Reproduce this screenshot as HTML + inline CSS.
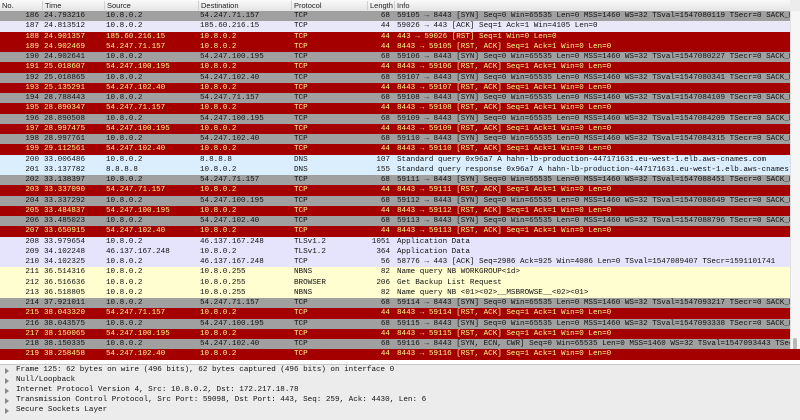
<!DOCTYPE html><html><head><style>
body{margin:0;width:800px;height:419px;overflow:hidden;background:#ececec;font-family:"Liberation Mono",monospace;font-size:7.6px;position:relative}
.hd{position:absolute;left:0;top:0;width:790px;height:11px;background:linear-gradient(#fafafa,#e4e4e4);border-bottom:1px solid #c8c8c8;font-family:"Liberation Sans",sans-serif;font-size:7.5px;color:#222}
.hd span{position:absolute;top:1px;border-left:1px solid #d0d0d0;padding-left:2px;height:9px}
.r{position:absolute;left:0;width:790px;height:10.25px;line-height:10.25px;white-space:nowrap;overflow:hidden;color:#111}
.r span{position:absolute}
.g{background:#a0a0a0;border-top:0}
.x{background:#a40000;color:#fff88a}
.w{background:#e8e8f8}
.d{background:#daeefe}
.l{background:#e6e4fc}
.y{background:#fefed0}
.n{right:751px;text-align:right}
.t{left:44px}.s{left:106px}.ds{left:200px}.p{left:294px}
.ln{right:400px;text-align:right}.i{left:397px}
.sb{position:absolute;left:790px;top:11px;width:10px;height:349px;background:#f6f6f6;border-left:1px solid #e0e0e0}
.th{position:absolute;left:793px;top:338px;width:4px;height:14px;border-radius:2px;background:#b8b8b8}
.bp{position:absolute;left:0;top:364px;width:800px;height:55px;background:#ececec;border-top:1px solid #c8c8c8}
.bl{position:absolute;left:16px;color:#111;white-space:nowrap}
.tri{position:absolute;left:5px;width:0;height:0;border-top:3px solid transparent;border-bottom:3px solid transparent;border-left:4px solid #8a8a8a}
</style></head><body>
<div class="hd"><span style="left:0;border:0">No.</span><span style="left:42px">Time</span><span style="left:104px">Source</span><span style="left:198px">Destination</span><span style="left:291px">Protocol</span><span style="left:367px">Length</span><span style="left:394px">Info</span></div>

<div class="r g" style="top:11px"><span class="n">186</span><span class="t">24.793216</span><span class="s">10.8.0.2</span><span class="ds">54.247.71.157</span><span class="p">TCP</span><span class="ln">68</span><span class="i">59105 → 8443 [SYN] Seq=0 Win=65535 Len=0 MSS=1460 WS=32 TSval=1547080119 TSecr=0 SACK_PE</span></div>
<div class="r w" style="top:21.25px"><span class="n">187</span><span class="t">24.813512</span><span class="s">10.8.0.2</span><span class="ds">185.60.216.15</span><span class="p">TCP</span><span class="ln">44</span><span class="i">59026 → 443 [ACK] Seq=1 Ack=1 Win=4105 Len=0</span></div>
<div class="r x" style="top:31.5px"><span class="n">188</span><span class="t">24.901357</span><span class="s">185.60.216.15</span><span class="ds">10.8.0.2</span><span class="p">TCP</span><span class="ln">44</span><span class="i">443 → 59026 [RST] Seq=1 Win=0 Len=0</span></div>
<div class="r x" style="top:41.75px"><span class="n">189</span><span class="t">24.902469</span><span class="s">54.247.71.157</span><span class="ds">10.8.0.2</span><span class="p">TCP</span><span class="ln">44</span><span class="i">8443 → 59105 [RST, ACK] Seq=1 Ack=1 Win=0 Len=0</span></div>
<div class="r g" style="top:52px"><span class="n">190</span><span class="t">24.902641</span><span class="s">10.8.0.2</span><span class="ds">54.247.100.195</span><span class="p">TCP</span><span class="ln">68</span><span class="i">59106 → 8443 [SYN] Seq=0 Win=65535 Len=0 MSS=1460 WS=32 TSval=1547080227 TSecr=0 SACK_PE</span></div>
<div class="r x" style="top:62.25px"><span class="n">191</span><span class="t">25.018607</span><span class="s">54.247.100.195</span><span class="ds">10.8.0.2</span><span class="p">TCP</span><span class="ln">44</span><span class="i">8443 → 59106 [RST, ACK] Seq=1 Ack=1 Win=0 Len=0</span></div>
<div class="r g" style="top:72.5px"><span class="n">192</span><span class="t">25.018865</span><span class="s">10.8.0.2</span><span class="ds">54.247.102.40</span><span class="p">TCP</span><span class="ln">68</span><span class="i">59107 → 8443 [SYN] Seq=0 Win=65535 Len=0 MSS=1460 WS=32 TSval=1547080341 TSecr=0 SACK_PE</span></div>
<div class="r x" style="top:82.75px"><span class="n">193</span><span class="t">25.135291</span><span class="s">54.247.102.40</span><span class="ds">10.8.0.2</span><span class="p">TCP</span><span class="ln">44</span><span class="i">8443 → 59107 [RST, ACK] Seq=1 Ack=1 Win=0 Len=0</span></div>
<div class="r g" style="top:93px"><span class="n">194</span><span class="t">28.788443</span><span class="s">10.8.0.2</span><span class="ds">54.247.71.157</span><span class="p">TCP</span><span class="ln">68</span><span class="i">59108 → 8443 [SYN] Seq=0 Win=65535 Len=0 MSS=1460 WS=32 TSval=1547084109 TSecr=0 SACK_PE</span></div>
<div class="r x" style="top:103.25px"><span class="n">195</span><span class="t">28.890347</span><span class="s">54.247.71.157</span><span class="ds">10.8.0.2</span><span class="p">TCP</span><span class="ln">44</span><span class="i">8443 → 59108 [RST, ACK] Seq=1 Ack=1 Win=0 Len=0</span></div>
<div class="r g" style="top:113.5px"><span class="n">196</span><span class="t">28.890508</span><span class="s">10.8.0.2</span><span class="ds">54.247.100.195</span><span class="p">TCP</span><span class="ln">68</span><span class="i">59109 → 8443 [SYN] Seq=0 Win=65535 Len=0 MSS=1460 WS=32 TSval=1547084209 TSecr=0 SACK_PE</span></div>
<div class="r x" style="top:123.75px"><span class="n">197</span><span class="t">28.997475</span><span class="s">54.247.100.195</span><span class="ds">10.8.0.2</span><span class="p">TCP</span><span class="ln">44</span><span class="i">8443 → 59109 [RST, ACK] Seq=1 Ack=1 Win=0 Len=0</span></div>
<div class="r g" style="top:134px"><span class="n">198</span><span class="t">28.997761</span><span class="s">10.8.0.2</span><span class="ds">54.247.102.40</span><span class="p">TCP</span><span class="ln">68</span><span class="i">59110 → 8443 [SYN] Seq=0 Win=65535 Len=0 MSS=1460 WS=32 TSval=1547084315 TSecr=0 SACK_PE</span></div>
<div class="r x" style="top:144.25px"><span class="n">199</span><span class="t">29.112561</span><span class="s">54.247.102.40</span><span class="ds">10.8.0.2</span><span class="p">TCP</span><span class="ln">44</span><span class="i">8443 → 59110 [RST, ACK] Seq=1 Ack=1 Win=0 Len=0</span></div>
<div class="r d" style="top:154.5px"><span class="n">200</span><span class="t">33.006486</span><span class="s">10.8.0.2</span><span class="ds">8.8.8.8</span><span class="p">DNS</span><span class="ln">107</span><span class="i">Standard query 0x96a7 A hahn-lb-production-447171631.eu-west-1.elb.aws-cnames.com</span></div>
<div class="r d" style="top:164.75px"><span class="n">201</span><span class="t">33.137782</span><span class="s">8.8.8.8</span><span class="ds">10.8.0.2</span><span class="p">DNS</span><span class="ln">155</span><span class="i">Standard query response 0x96a7 A hahn-lb-production-447171631.eu-west-1.elb.aws-cnames.c</span></div>
<div class="r g" style="top:175px"><span class="n">202</span><span class="t">33.138397</span><span class="s">10.8.0.2</span><span class="ds">54.247.71.157</span><span class="p">TCP</span><span class="ln">68</span><span class="i">59111 → 8443 [SYN] Seq=0 Win=65535 Len=0 MSS=1460 WS=32 TSval=1547088451 TSecr=0 SACK_PE</span></div>
<div class="r x" style="top:185.25px"><span class="n">203</span><span class="t">33.337090</span><span class="s">54.247.71.157</span><span class="ds">10.8.0.2</span><span class="p">TCP</span><span class="ln">44</span><span class="i">8443 → 59111 [RST, ACK] Seq=1 Ack=1 Win=0 Len=0</span></div>
<div class="r g" style="top:195.5px"><span class="n">204</span><span class="t">33.337292</span><span class="s">10.8.0.2</span><span class="ds">54.247.100.195</span><span class="p">TCP</span><span class="ln">68</span><span class="i">59112 → 8443 [SYN] Seq=0 Win=65535 Len=0 MSS=1460 WS=32 TSval=1547088649 TSecr=0 SACK_PE</span></div>
<div class="r x" style="top:205.75px"><span class="n">205</span><span class="t">33.484837</span><span class="s">54.247.100.195</span><span class="ds">10.8.0.2</span><span class="p">TCP</span><span class="ln">44</span><span class="i">8443 → 59112 [RST, ACK] Seq=1 Ack=1 Win=0 Len=0</span></div>
<div class="r g" style="top:216px"><span class="n">206</span><span class="t">33.485023</span><span class="s">10.8.0.2</span><span class="ds">54.247.102.40</span><span class="p">TCP</span><span class="ln">68</span><span class="i">59113 → 8443 [SYN] Seq=0 Win=65535 Len=0 MSS=1460 WS=32 TSval=1547088796 TSecr=0 SACK_PE</span></div>
<div class="r x" style="top:226.25px"><span class="n">207</span><span class="t">33.650915</span><span class="s">54.247.102.40</span><span class="ds">10.8.0.2</span><span class="p">TCP</span><span class="ln">44</span><span class="i">8443 → 59113 [RST, ACK] Seq=1 Ack=1 Win=0 Len=0</span></div>
<div class="r l" style="top:236.5px"><span class="n">208</span><span class="t">33.979654</span><span class="s">10.8.0.2</span><span class="ds">46.137.167.248</span><span class="p">TLSv1.2</span><span class="ln">1051</span><span class="i">Application Data</span></div>
<div class="r l" style="top:246.75px"><span class="n">209</span><span class="t">34.102248</span><span class="s">46.137.167.248</span><span class="ds">10.8.0.2</span><span class="p">TLSv1.2</span><span class="ln">364</span><span class="i">Application Data</span></div>
<div class="r l" style="top:257px"><span class="n">210</span><span class="t">34.102325</span><span class="s">10.8.0.2</span><span class="ds">46.137.167.248</span><span class="p">TCP</span><span class="ln">56</span><span class="i">58776 → 443 [ACK] Seq=2986 Ack=925 Win=4086 Len=0 TSval=1547089407 TSecr=1591101741</span></div>
<div class="r y" style="top:267.25px"><span class="n">211</span><span class="t">36.514316</span><span class="s">10.8.0.2</span><span class="ds">10.8.0.255</span><span class="p">NBNS</span><span class="ln">82</span><span class="i">Name query NB WORKGROUP&lt;1d&gt;</span></div>
<div class="r y" style="top:277.5px"><span class="n">212</span><span class="t">36.516636</span><span class="s">10.8.0.2</span><span class="ds">10.8.0.255</span><span class="p">BROWSER</span><span class="ln">206</span><span class="i">Get Backup List Request</span></div>
<div class="r y" style="top:287.75px"><span class="n">213</span><span class="t">36.518805</span><span class="s">10.8.0.2</span><span class="ds">10.8.0.255</span><span class="p">NBNS</span><span class="ln">82</span><span class="i">Name query NB &lt;01&gt;&lt;02&gt;__MSBROWSE__&lt;02&gt;&lt;01&gt;</span></div>
<div class="r g" style="top:298px"><span class="n">214</span><span class="t">37.921011</span><span class="s">10.8.0.2</span><span class="ds">54.247.71.157</span><span class="p">TCP</span><span class="ln">68</span><span class="i">59114 → 8443 [SYN] Seq=0 Win=65535 Len=0 MSS=1460 WS=32 TSval=1547093217 TSecr=0 SACK_PE</span></div>
<div class="r x" style="top:308.25px"><span class="n">215</span><span class="t">38.043320</span><span class="s">54.247.71.157</span><span class="ds">10.8.0.2</span><span class="p">TCP</span><span class="ln">44</span><span class="i">8443 → 59114 [RST, ACK] Seq=1 Ack=1 Win=0 Len=0</span></div>
<div class="r g" style="top:318.5px"><span class="n">216</span><span class="t">38.043575</span><span class="s">10.8.0.2</span><span class="ds">54.247.100.195</span><span class="p">TCP</span><span class="ln">68</span><span class="i">59115 → 8443 [SYN] Seq=0 Win=65535 Len=0 MSS=1460 WS=32 TSval=1547093338 TSecr=0 SACK_PE</span></div>
<div class="r x" style="top:328.75px"><span class="n">217</span><span class="t">38.150065</span><span class="s">54.247.100.195</span><span class="ds">10.8.0.2</span><span class="p">TCP</span><span class="ln">44</span><span class="i">8443 → 59115 [RST, ACK] Seq=1 Ack=1 Win=0 Len=0</span></div>
<div class="r g" style="top:339px"><span class="n">218</span><span class="t">38.150335</span><span class="s">10.8.0.2</span><span class="ds">54.247.102.40</span><span class="p">TCP</span><span class="ln">68</span><span class="i">59116 → 8443 [SYN, ECN, CWR] Seq=0 Win=65535 Len=0 MSS=1460 WS=32 TSval=1547093443 TSecr</span></div>
<div class="sb" style="height:338px"></div><div class="th"></div>
<div style="position:absolute;left:0;top:349.25px;width:800px;height:10.25px;background:#a40000"></div>
<div class="r x" style="top:349.25px"><span class="n">219</span><span class="t">38.258458</span><span class="s">54.247.102.40</span><span class="ds">10.8.0.2</span><span class="p">TCP</span><span class="ln">44</span><span class="i">8443 → 59116 [RST, ACK] Seq=1 Ack=1 Win=0 Len=0</span></div>
<div style="position:absolute;left:0;top:359.5px;width:800px;height:4px;background:#fff"></div>

<div class="bp">
<div class="tri" style="top:3px"></div><div class="bl" style="top:1px">Frame 125: 62 bytes on wire (496 bits), 62 bytes captured (496 bits) on interface 0</div>
<div class="tri" style="top:13px"></div><div class="bl" style="top:11px">Null/Loopback</div>
<div class="tri" style="top:23px"></div><div class="bl" style="top:21px">Internet Protocol Version 4, Src: 10.8.0.2, Dst: 172.217.18.78</div>
<div class="tri" style="top:33px"></div><div class="bl" style="top:31px">Transmission Control Protocol, Src Port: 59098, Dst Port: 443, Seq: 259, Ack: 4430, Len: 6</div>
<div class="tri" style="top:43px"></div><div class="bl" style="top:41px">Secure Sockets Layer</div>
</div>
</body></html>
